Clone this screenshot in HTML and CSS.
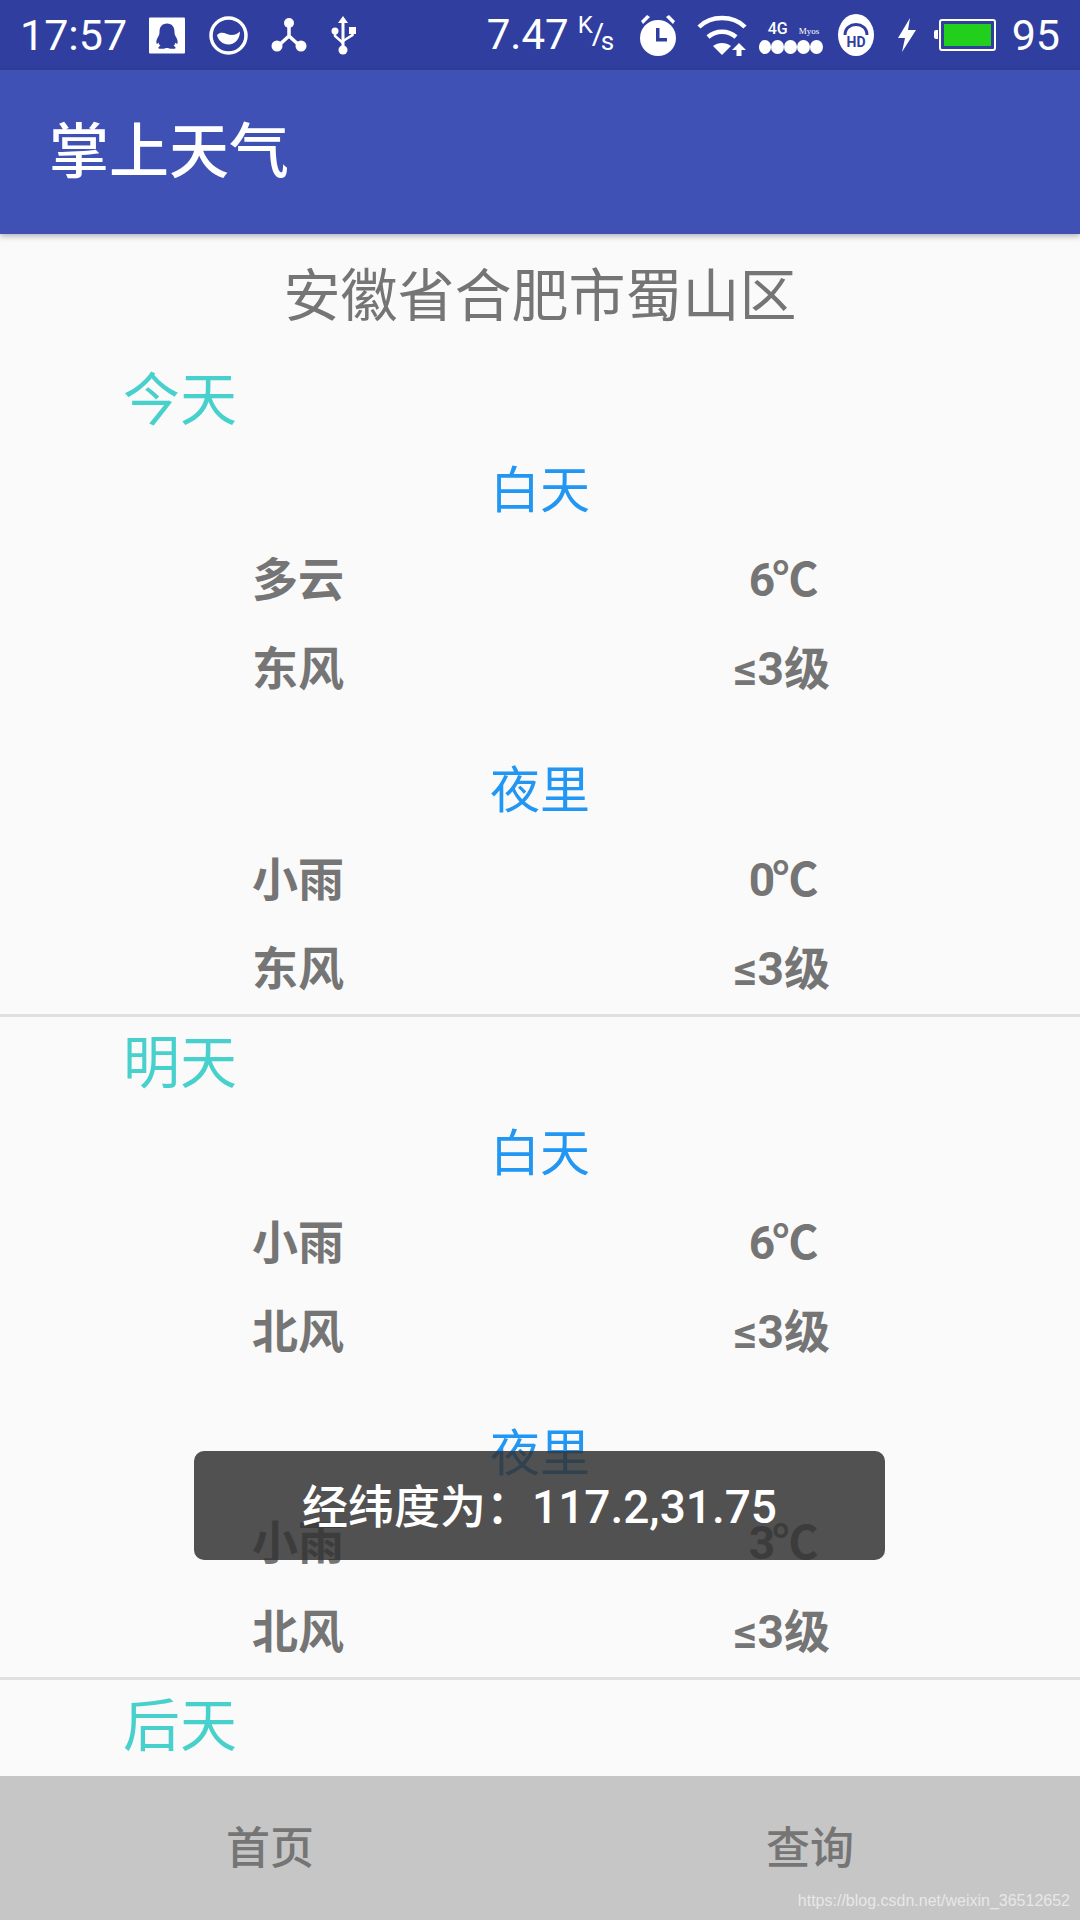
FILE: index.html
```html
<!DOCTYPE html>
<html lang="zh-CN">
<head>
    <meta charset="UTF-8">
    <meta name="viewport" content="width=device-width, initial-scale=1.0">
    <title>掌上天气</title>
    <link rel="stylesheet" href="styles.css">
</head>
<body>
    <div class="status-bar">
        <div class="status-left">
            <span class="clock">17:57</span>
            <!-- qq -->
            <svg class="ic-qq" viewBox="0 0 36 36"><rect width="36" height="36" rx="1" fill="#fff"/><path d="M18 6c-5 0-7.500 3.500-7.500 8.500 0 2-.5 3.500-1.500 5-1.200 2-2 4-1.500 6.500.5.800 1.500-.2 2-1 .3 1.500 1 2.500 2 3.300-1.300.5-2.200 1.200-2 2.200.3 1 2.500 1 5 .7 1.500-.2 2.500-.7 3.500-.7s2 .5 3.500.7c2.500.3 4.700.3 5-.7.2-1-.7-1.700-2-2.200 1-.8 1.700-1.800 2-3.300.5.800 1.500 1.800 2 1 .5-2.500-.3-4.500-1.500-6.500-1-1.500-1.500-3-1.500-5C25.500 9.500 23 6 18 6z" fill="#303f9f"/></svg>
            <!-- circle with wave -->
            <svg class="ic-wave" viewBox="0 0 39 39"><circle cx="19.500" cy="19.500" r="17.500" fill="none" stroke="#fff" stroke-width="3.500"/><path d="M8 19c3-3 6-2.500 10-1 4 1.500 9 1.500 13-2.500 0 7-5 13-11.500 13C14 28.500 9 24.500 8 19z" fill="#fff"/></svg>
            <!-- three dots -->
            <svg class="ic-tri" viewBox="0 0 36 36"><path d="M18 7v12M18 19L7 29M18 19l11 10" stroke="#fff" stroke-width="3.500" fill="none"/><circle cx="18" cy="6" r="5" fill="#fff"/><circle cx="6" cy="29" r="5.500" fill="#fff"/><circle cx="30" cy="29" r="5.500" fill="#fff"/></svg>
            <!-- usb -->
            <svg class="ic-usb" viewBox="0 0 25 40"><path d="M12 1l5 7h-3.500v25h-3V8H7z" fill="#fff"/><circle cx="12" cy="35" r="4.500" fill="#fff"/><circle cx="4" cy="16" r="3.500" fill="#fff"/><rect x="18" y="12" width="7" height="7" fill="#fff"/><path d="M4 16v5l8 7M21.500 16v4l-9.500 6" stroke="#fff" stroke-width="2.500" fill="none"/></svg>
        </div>
        <div class="status-right">
            <span class="speed">7.47</span>
            <span class="speed-unit"><span class="unit-k">K</span><span class="unit-slash">/</span><span class="unit-s">s</span></span>
            <!-- alarm -->
            <svg class="ic-alarm" viewBox="0 0 38 44"><circle cx="19" cy="25" r="18" fill="#fff"/><path d="M2 8l6-6 3 2-7 7zM36 8l-6-6-3 2 7 7z" fill="#fff"/><path d="M17 15h3.500v10H28v3.500H17z" fill="#303f9f"/></svg>
            <!-- wifi -->
            <svg class="ic-wifi" viewBox="0 0 50 42"><path d="M2 13C14 1 36 1 48 13" stroke="#fff" stroke-width="4.500" fill="none"/><path d="M11 23c8-7 20-7 28 0" stroke="#fff" stroke-width="4.500" fill="none"/><path d="M25 41L16 32c5-4 13-4 18 0z" fill="#fff"/><path d="M42 29l7 7h-4.500v6h-5v-6H35z" fill="#fff"/></svg>
            <div class="signal">
                <div class="signal-top"><span class="net">4G</span><span class="carrier">Myos</span></div>
                <div class="dots"><i></i><i></i><i></i><i></i><i></i></div>
            </div>
            <!-- headset hd -->
            <svg class="ic-hd" viewBox="0 0 36 42"><ellipse cx="18" cy="21" rx="18" ry="21" fill="#fff"/><path d="M7 21c0-14 22-14 22 0" stroke="#303f9f" stroke-width="3" fill="none"/><text x="18" y="33" text-anchor="middle" class="hd-text">HD</text></svg>
            <!-- bolt -->
            <svg class="ic-bolt" viewBox="0 0 20 34"><path d="M13 0L1 20h7L5 34l14-22h-8z" fill="#fff"/></svg>
            <div class="battery"><div class="battery-fill"></div></div>
            <span class="level">95</span>
        </div>
    </div>

    <div class="app-bar">掌上天气</div>

    <div class="content">
        <div class="location">安徽省合肥市蜀山区</div>

        <div class="day">
            <div class="day-name">今天</div>
            <div class="period">
                <div class="period-name">白天</div>
                <div class="row"><span>多云</span><span class="temp">6℃</span></div>
                <div class="row"><span>东风</span><span>≤3级</span></div>
            </div>
            <div class="period">
                <div class="period-name">夜里</div>
                <div class="row"><span>小雨</span><span class="temp">0℃</span></div>
                <div class="row"><span>东风</span><span>≤3级</span></div>
            </div>
        </div>

        <div class="day">
            <div class="day-name">明天</div>
            <div class="period">
                <div class="period-name">白天</div>
                <div class="row"><span>小雨</span><span class="temp">6℃</span></div>
                <div class="row"><span>北风</span><span>≤3级</span></div>
            </div>
            <div class="period">
                <div class="period-name">夜里</div>
                <div class="row"><span>小雨</span><span class="temp">3℃</span></div>
                <div class="row"><span>北风</span><span>≤3级</span></div>
            </div>
        </div>

        <div class="day last">
            <div class="day-name">后天</div>
        </div>
    </div>

    <div class="bottom-nav">
        <div class="nav-item">首页</div>
        <div class="nav-item">查询</div>
    </div>

    <div class="toast">经纬度为：117.2,31.75</div>
    <div class="watermark">https://blog.csdn.net/weixin_36512652</div>
</body>
</html>
```

FILE: styles.css
```css
* {
    box-sizing: border-box;
}

body {
    margin: 0;
    width: 1080px;
    height: 1920px;
    display: flex;
    flex-direction: column;
    position: relative;
    overflow: hidden;
    background-color: #fafafa;
    font-family: Roboto, "Noto Sans CJK SC", sans-serif;
    color: #757575;
}

/* status bar */
.status-bar {
    height: 70px;
    flex-shrink: 0;
    display: flex;
    justify-content: space-between;
    align-items: center;
    padding: 0 20px;
    background-color: #303f9f;
    color: #fff;
}

.status-left,
.status-right {
    display: flex;
    align-items: center;
}

.clock {
    font-size: 43px;
    line-height: 1;
    width: 106px;
}

.ic-qq {
    width: 36px;
    height: 37px;
    margin-left: 23px;
}

.ic-wave {
    width: 39px;
    height: 39px;
    margin-left: 24px;
}

.ic-tri {
    width: 36px;
    height: 36px;
    margin-left: 23px;
}

.ic-usb {
    width: 25px;
    height: 40px;
    margin-left: 24px;
}

.speed {
    font-size: 42px;
    line-height: 1;
}

.speed-unit {
    position: relative;
    width: 38px;
    height: 40px;
    margin-left: 9px;
}

.unit-k,
.unit-s,
.unit-slash {
    position: absolute;
    line-height: 1;
}

.unit-k {
    left: 0;
    top: -2px;
    font-size: 24px;
}

.unit-slash {
    left: 14px;
    top: 4px;
    font-size: 30px;
}

.unit-s {
    left: 23px;
    top: 13px;
    font-size: 26px;
}

.ic-alarm {
    width: 38px;
    height: 44px;
    margin-left: 23px;
}

.ic-wifi {
    width: 50px;
    height: 42px;
    margin-left: 20px;
}

.signal {
    width: 64px;
    margin-left: 12px;
}

.signal-top {
    display: flex;
    align-items: flex-end;
    height: 20px;
}

.net {
    font-size: 16px;
    font-weight: 500;
    line-height: 16px;
    margin-left: 9px;
}

.carrier {
    font-family: "Liberation Serif", serif;
    font-size: 9px;
    line-height: 12px;
    margin-left: 11px;
}

.dots {
    display: flex;
    margin-top: 3px;
}

.dots i {
    width: 13px;
    height: 14px;
    border-radius: 50%;
    background-color: #fff;
}

.ic-hd {
    width: 36px;
    height: 42px;
    margin-left: 15px;
}

.hd-text {
    font-size: 14px;
    font-weight: 700;
    fill: #303f9f;
}

.ic-bolt {
    width: 20px;
    height: 34px;
    margin-left: 23px;
}

.battery {
    position: relative;
    width: 57px;
    height: 32px;
    margin-left: 22px;
    padding: 3px;
    border: 2px solid #fff;
    border-radius: 3px;
}

.battery::before {
    content: "";
    position: absolute;
    left: -7px;
    top: 9px;
    width: 4px;
    height: 9px;
    border-radius: 2px 0 0 2px;
    background-color: #fff;
}

.battery-fill {
    height: 100%;
    background-color: #22cf1c;
}

.level {
    font-size: 43px;
    line-height: 1;
    margin-left: 16px;
}

/* app bar */
.app-bar {
    height: 164px;
    flex-shrink: 0;
    position: relative;
    padding-left: 49px;
    line-height: 165px;
    font-size: 60px;
    font-weight: 500;
    color: #fff;
    background-color: #3f51b5;
    box-shadow: 0 2px 6px rgba(0, 0, 0, 0.3);
}

/* forecast list */
.content {
    flex: 1;
    overflow: hidden;
}

.location {
    height: 120px;
    padding-top: 22px;
    line-height: 82px;
    text-align: center;
    font-size: 57px;
}

.day {
    border-bottom: 3px solid #e0e0e0;
}

.day.last {
    border-bottom: none;
}

.day-name {
    height: 92px;
    line-height: 94px;
    padding-left: 123px;
    font-size: 57px;
    color: #48d1cc;
}

.period + .period {
    margin-top: 32px;
}

.period-name {
    height: 90px;
    line-height: 90px;
    text-align: center;
    font-size: 50px;
    color: #2196f3;
}

.row {
    display: grid;
    grid-template-columns: 484px 484px;
    justify-content: center;
    height: 89px;
    line-height: 89px;
    text-align: center;
    font-size: 46px;
    font-weight: 700;
}

.temp {
    letter-spacing: -3px;
}

/* bottom tabs */
.bottom-nav {
    height: 144px;
    flex-shrink: 0;
    display: grid;
    grid-template-columns: 1fr 1fr;
    background-color: #c6c6c6;
}

.nav-item {
    line-height: 146px;
    text-align: center;
    font-size: 44px;
    font-weight: 500;
}

/* overlays */
.toast {
    position: absolute;
    left: 194px;
    top: 1451px;
    width: 691px;
    height: 109px;
    line-height: 113px;
    text-align: center;
    font-size: 46px;
    font-weight: 500;
    color: #fff;
    background-color: rgba(50, 50, 50, 0.85);
    border-radius: 10px;
}

.watermark {
    position: absolute;
    right: 10px;
    bottom: 9px;
    font-family: "Liberation Sans", sans-serif;
    font-size: 16px;
    line-height: 20px;
    color: rgba(255, 255, 255, 0.6);
}
```
